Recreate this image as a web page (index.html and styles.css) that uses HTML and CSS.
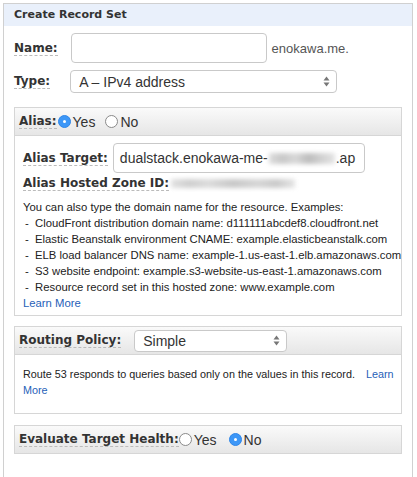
FILE: index.html
```html
<!DOCTYPE html>
<html>
<head>
<meta charset="utf-8">
<link rel="stylesheet" href="styles.css">
</head>
<body>
<div class="panel">
  <div class="panel-head">Create Record Set</div>
  <div class="row row-name">
    <span class="lbl lbl-main">Name:</span>
    <div class="input input-name"></div>
    <span class="suffix">enokawa.me.</span>
  </div>
  <div class="row row-type">
    <span class="lbl lbl-main">Type:</span>
    <div class="select select-type">
      <span>A – IPv4 address</span>
      <svg class="arrows" width="7" height="11" viewBox="0 0 7 11"><path d="M3.5 0.5 L6.5 4.5 L0.5 4.5 Z M3.5 10.5 L6.5 6.5 L0.5 6.5 Z" fill="#777"/></svg>
    </div>
  </div>

  <div class="box box-alias">
    <div class="box-head">
      <span class="lbl">Alias:</span>
      <span class="radio on"></span><span class="rtext">Yes</span>
      <span class="radio off gap"></span><span class="rtext">No</span>
    </div>
    <div class="box-body">
      <div class="row row-target">
        <span class="lbl">Alias Target:</span>
        <div class="input input-target">dualstack.enokawa-me-<span class="blur blur-a"></span>.ap</div>
      </div>
      <div class="row row-zone">
        <span class="lbl">Alias Hosted Zone ID:</span>
        <span class="blur blur-z"></span>
      </div>
      <div class="help">
        <div>You can also type the domain name for the resource. Examples:</div>
        <div class="li">-&nbsp; CloudFront distribution domain name: d111111abcdef8.cloudfront.net</div>
        <div class="li">-&nbsp; Elastic Beanstalk environment CNAME: example.elasticbeanstalk.com</div>
        <div class="li">-&nbsp; ELB load balancer DNS name: example-1.us-east-1.elb.amazonaws.com</div>
        <div class="li">-&nbsp; S3 website endpoint: example.s3-website-us-east-1.amazonaws.com</div>
        <div class="li">-&nbsp; Resource record set in this hosted zone: www.example.com</div>
        <div><a class="link">Learn More</a></div>
      </div>
    </div>
  </div>

  <div class="box box-routing">
    <div class="box-head">
      <span class="lbl">Routing Policy:</span>
      <div class="select select-routing">
        <span>Simple</span>
        <svg class="arrows" width="7" height="11" viewBox="0 0 7 11"><path d="M3.5 0.5 L6.5 4.5 L0.5 4.5 Z M3.5 10.5 L6.5 6.5 L0.5 6.5 Z" fill="#777"/></svg>
      </div>
    </div>
    <div class="box-body routing-body">
      Route 53 responds to queries based only on the values in this record. <a class="link link-more">Learn More</a>
    </div>
  </div>

  <div class="box box-eval">
    <div class="box-head">
      <span class="lbl">Evaluate Target Health:</span>
      <span class="radio off"></span><span class="rtext">Yes</span>
      <span class="radio on gap2"></span><span class="rtext">No</span>
    </div>
  </div>
</div>
</body>
</html>
```

FILE: styles.css
```css
html, body {
  margin: 0;
  padding: 0;
  background: #fff;
  height: 100%;
}
body {
  font-family: "Liberation Sans", Arial, sans-serif;
  color: #222;
  overflow: hidden;
}
.panel {
  margin: 3px 4px 0 3px;
  border: 1px solid #d0d0d0;
  border-bottom: none;
  height: calc(100% - 3px);
  box-sizing: border-box;
}
.panel-head {
  height: 22px;
  background: #e9f0fb;
  font-family: "DejaVu Sans", Verdana, sans-serif;
  font-weight: bold;
  font-size: 11px;
  color: #333;
  line-height: 22px;
  padding-left: 10px;
}
.row {
  display: flex;
  align-items: center;
}
.row-name {
  margin-top: 7px;
  padding-left: 10px;
  height: 30px;
}
.row-type {
  margin-top: 7px;
  padding-left: 10px;
  height: 23px;
}
.lbl {
  font-family: "DejaVu Sans", Verdana, sans-serif;
  font-weight: bold;
  font-size: 12px;
  color: #333;
  line-height: 14px;
  border-bottom: 1px dashed #bbb;
  white-space: nowrap;
}
.lbl-main {
  flex: none;
  margin-right: 13px;
}
.row-type .lbl-main { margin-right: 20px; }
.input {
  box-sizing: border-box;
  border: 1px solid #c9c9c9;
  border-radius: 4px;
  background: #fff;
  font-size: 14px;
  color: #333;
  display: flex;
  align-items: center;
  white-space: nowrap;
  overflow: hidden;
}
.input-name {
  width: 196px;
  height: 30px;
}
.suffix {
  font-size: 13px;
  color: #555;
  margin-left: 5px;
}
.select {
  box-sizing: border-box;
  border: 1px solid #c9c9c9;
  border-radius: 4px;
  background: #fff;
  font-size: 14px;
  color: #333;
  display: flex;
  align-items: center;
  justify-content: space-between;
  padding: 0 6px 0 8px;
}
.select-type {
  width: 267px;
  height: 23px;
}
.arrows { display: block; }

.box {
  margin: 0 10px 0 10px;
  border: 1px solid #d6d6d6;
}
.box-alias { margin-top: 14px; }
.box-routing { margin-top: 10px; }
.box-eval { margin-top: 11px; }
.box-head {
  height: 27px;
  background: linear-gradient(#fafafa, #e6e6e6);
  border-bottom: 1px solid #d6d6d6;
  display: flex;
  align-items: center;
  padding-left: 4px;
}
.box-eval .box-head { border-bottom: none; }
.radio {
  width: 13px;
  height: 13px;
  border-radius: 50%;
  box-sizing: border-box;
  display: inline-block;
  flex: none;
  margin-left: 1px;
  position: relative;
}
.radio.on {
  background: #3d97f7;
  border: 1px solid #2f86e8;
}
.radio.on::after {
  content: "";
  position: absolute;
  left: 4px;
  top: 4px;
  width: 3px;
  height: 3px;
  border-radius: 50%;
  background: #fff;
}
.radio.off {
  background: #fff;
  border: 1px solid #8a8a8a;
}
.radio.gap { margin-left: 10px; }
.radio.gap2 { margin-left: 12px; }
.rtext {
  font-size: 14px;
  color: #333;
  margin-left: 2px;
}
.box-body {
  padding: 7px 8px 4px 8px;
}
.row-target { height: 30px; }
.row-target .lbl { margin-right: 5px; }
.input-target {
  width: 252px;
  height: 30px;
  padding-left: 6px;
}
.blur {
  display: inline-block;
  filter: blur(2px);
}
.blur-a {
  width: 66px;
  height: 11px;
  margin: 0 1px;
  background: linear-gradient(90deg, #ddd, #c8c8c8 20%, #d8d8d8 40%, #bdbdbd 60%, #d2d2d2 80%, #e4e4e4);
}
.row-zone { height: 16px; margin-top: 2px; }
.blur-z {
  width: 124px;
  height: 9px;
  margin-left: 2px;
  background: linear-gradient(90deg, #e2e2e2, #cfcfcf 15%, #dcdcdc 30%, #c8c8c8 50%, #d6d6d6 70%, #cacaca 85%, #e6e6e6);
}
.help {
  margin-top: 8px;
  font-size: 11.3px;
  line-height: 16px;
  color: #222;
  white-space: nowrap;
}
.li { padding-left: 2px; }
.link { color: #1f5fb8; }
.select-routing {
  width: 153px;
  height: 22px;
  margin-left: 13px;
}
.routing-body {
  padding: 11px 6px 15px 8px;
  font-size: 10.8px;
  line-height: 16px;
  color: #222;
}
.link-more { margin-left: 8px; }
.box-eval .box-head .radio.off { margin-left: 0; }
```
